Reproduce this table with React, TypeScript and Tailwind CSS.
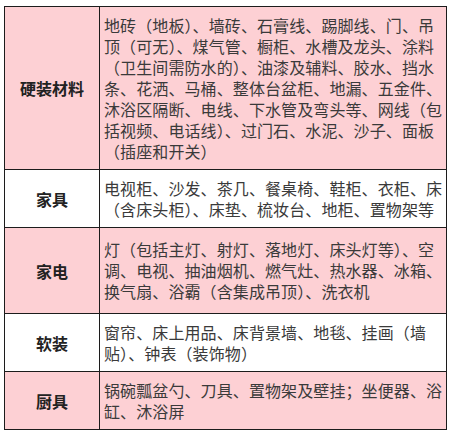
import React from 'react'

type Row = { label: string; lines: string[]; pink: boolean; h: string }

const rows: Row[] = [
  {
    label: '硬装材料',
    pink: true,
    h: 'h-[162px]',
    lines: [
      '地砖（地板）、墙砖、石膏线、踢脚线、门、吊',
      '顶（可无）、煤气管、橱柜、水槽及龙头、涂料',
      '（卫生间需防水的）、油漆及辅料、胶水、挡水',
      '条、花洒、马桶、整体台盆柜、地漏、五金件、',
      '沐浴区隔断、电线、下水管及弯头等、网线（包',
      '括视频、电话线）、过门石、水泥、沙子、面板',
      '（插座和开关）',
    ],
  },
  {
    label: '家具',
    pink: false,
    h: 'h-[58px]',
    lines: ['电视柜、沙发、茶几、餐桌椅、鞋柜、衣柜、床', '（含床头柜）、床垫、梳妆台、地柜、置物架等'],
  },
  {
    label: '家电',
    pink: true,
    h: 'h-[86px]',
    lines: [
      '灯（包括主灯、射灯、落地灯、床头灯等）、空',
      '调、电视、抽油烟机、燃气灶、热水器、冰箱、',
      '换气扇、浴霸（含集成吊顶）、洗衣机',
    ],
  },
  {
    label: '软装',
    pink: false,
    h: 'h-[58px]',
    lines: ['窗帘、床上用品、床背景墙、地毯、挂画（墙', '贴）、钟表（装饰物）'],
  },
  {
    label: '厨具',
    pink: true,
    h: 'h-[58px]',
    lines: ['锅碗瓢盆勺、刀具、置物架及壁挂；坐便器、浴', '缸、沐浴屏'],
  },
]

export default function App() {
  return (
    <div
      className="w-[454px] h-[436px] bg-white pt-[6px] pl-[4px]"
      style={{ fontFamily: '"Noto Sans CJK SC", "Noto Sans", sans-serif' }}
    >
      <div className="w-[443px] border border-[#1c1c1c]">
        {rows.map((r, i) => (
          <div
            key={r.label}
            className={`flex ${r.h} ${i > 0 ? 'border-t border-[#1c1c1c]' : ''} ${r.pink ? 'bg-[#fdd0d4]' : 'bg-white'}`}
          >
            <div className="w-[95px] shrink-0 flex items-center justify-center border-r border-[#1c1c1c] text-[16px] font-bold text-[#222]">
              {r.label}
            </div>
            <div className="flex-1 flex flex-col justify-center pl-[4px] text-[16px] leading-[21px] text-[#3a3a3a] tracking-[0.1px]">
              {r.lines.map((l) => (
                <div key={l} className="whitespace-nowrap">
                  {l}
                </div>
              ))}
            </div>
          </div>
        ))}
      </div>
    </div>
  )
}
